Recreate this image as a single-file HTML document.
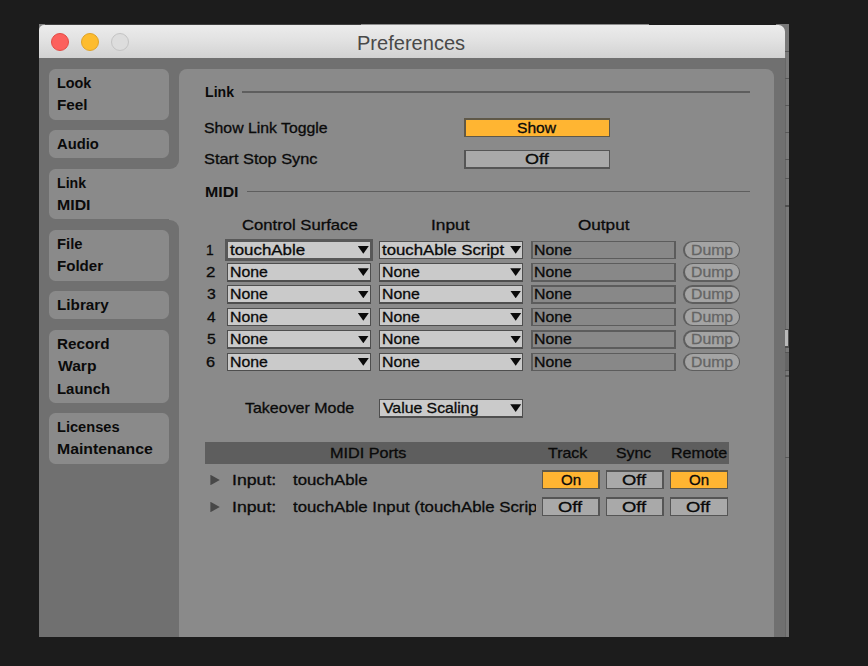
<!DOCTYPE html>
<html lang="en">
<head>
<meta charset="utf-8">
<title>Preferences</title>
<style>
html,body{margin:0;padding:0;}
body{width:868px;height:666px;background:#1c1c1c;overflow:hidden;position:relative;
  font-family:"Liberation Sans",sans-serif;font-size:14.5px;color:#0a0a0a;}
div{position:absolute;box-sizing:border-box;}
.t{white-space:nowrap;line-height:20px;height:20px;transform-origin:0 0;-webkit-text-stroke:0.3px;}
.b{font-weight:bold;-webkit-text-stroke:0;}
.g{background:#8a8a8a;}
.hr{height:1.5px;background:#5e5e5e;}
.btn{background:#555555;}.btni{background:#a9a9a9;}
.on{background:#5f5848;}.oni{background:#ffb532;}
.dd{background:#4e4e4e;}.ddi{background:#cacaca;}
.ddf{background:#585858;}.ddfi{background:#cacaca;}
.out{background:#5c5c5c;}.outi{background:#888888;}
.pill{background:#5e5e5e;}.pilli{background:#a4a4a4;}
.arrow{width:11px;height:7.6px;background:#0a0a0a;clip-path:polygon(0 0,100% 0,50% 100%);}
.tri{width:9.4px;height:10.4px;background:#484848;clip-path:polygon(0 0,100% 50%,0 100%);}
.tick{left:785px;width:4px;height:1px;background:#575757;}
.dot{top:33px;width:18px;height:18px;border-radius:50%;}
</style>
</head>
<body>
<div style="left:39px;top:24.2px;width:322px;height:5.8px;background:#404040;"></div>
<div style="left:39px;top:24.2px;width:6px;height:6.8px;background:#808080;"></div>
<div style="left:361px;top:24.2px;width:288px;height:5.8px;background:#8c8c8c;"></div>
<div style="left:776px;top:24px;width:13px;height:613px;background:#797979;"></div>
<div style="left:39px;top:25.3px;width:746px;height:611.7px;background:#707070;border-radius:5px 6.5px 0 0;"></div>
<div style="left:784.5px;top:58px;width:1.5px;height:579px;background:#676767;"></div>
<div class="tick" style="top:51px;"></div>
<div class="tick" style="top:78px;"></div>
<div class="tick" style="top:105px;"></div>
<div class="tick" style="top:132px;"></div>
<div class="tick" style="top:158.5px;"></div>
<div class="tick" style="top:178px;"></div>
<div class="tick" style="top:457px;"></div>
<div style="left:785px;top:204.5px;width:4px;height:2.5px;background:#4e4e4e;"></div>
<div style="left:784.5px;top:328.5px;width:4.5px;height:19.0px;background:#4e4e4e;"></div>
<div style="left:784.7px;top:330px;width:3.6px;height:16px;background:#b9b9b9;"></div>
<div style="left:785px;top:352px;width:4px;height:19px;background:#666666;border-top:1.5px solid #555;border-bottom:1.5px solid #555;"></div>
<div style="left:785px;top:374.5px;width:4px;height:2.5px;background:#555;"></div>
<div style="left:39px;top:25.3px;width:746px;height:32.7px;background:linear-gradient(#ececec,#e2e2e2 45%,#d2d2d2);border-radius:5px 6.5px 0 0;"></div>
<div class="dot" style="left:51px;background:#fc615d;border:1px solid #e34b44;"></div>
<div class="dot" style="left:80.75px;background:#fdbc2e;border:1px solid #e0a327;"></div>
<div class="dot" style="left:110.5px;background:#dddddd;border:1px solid #c4c4c4;"></div>
<div class="t" style="left:357.26px;top:33px;transform:scaleX(1.0282);font-size:19.5px;color:#494949;-webkit-text-stroke:0;">Preferences</div>
<div class="g" style="left:49px;top:69px;width:120px;height:50.5px;border-radius:6.5px;"></div>
<div class="g" style="left:49px;top:130px;width:120px;height:28px;border-radius:6.5px;"></div>
<div class="g" style="left:49px;top:168.6px;width:120px;height:50.9px;border-radius:6.5px;"></div>
<div class="g" style="left:49px;top:230px;width:120px;height:50.5px;border-radius:6.5px;"></div>
<div class="g" style="left:49px;top:291px;width:120px;height:28px;border-radius:6.5px;"></div>
<div class="g" style="left:49px;top:330px;width:120px;height:73px;border-radius:6.5px;"></div>
<div class="g" style="left:49px;top:413px;width:120px;height:51px;border-radius:6.5px;"></div>
<div class="g" style="left:179px;top:69px;width:595px;height:568px;border-radius:8px 8px 0 0;"></div>
<div class="g" style="left:160px;top:168.6px;width:30px;height:50.9px;"></div>
<div class="g" style="left:169px;top:158px;width:11px;height:11px;"></div>
<div style="left:169px;top:155px;width:10px;height:13.6px;background:#707070;border-radius:0 0 9px 0;"></div>
<div class="g" style="left:169px;top:219px;width:11px;height:12px;"></div>
<div style="left:169px;top:219.5px;width:10px;height:13.5px;background:#707070;border-radius:0 9px 0 0;"></div>
<div class="t b" style="left:57.01px;top:73px;transform:scaleX(0.9925);">Look</div>
<div class="t b" style="left:56.94px;top:95px;transform:scaleX(1.0556);">Feel</div>
<div class="t b" style="left:57.49px;top:134px;transform:scaleX(1.0188);">Audio</div>
<div class="t b" style="left:57.03px;top:173px;transform:scaleX(0.9739);">Link</div>
<div class="t b" style="left:56.90px;top:195px;transform:scaleX(1.0957);">MIDI</div>
<div class="t b" style="left:56.98px;top:234px;transform:scaleX(1.0213);">File</div>
<div class="t b" style="left:56.96px;top:256px;transform:scaleX(1.0405);">Folder</div>
<div class="t b" style="left:56.95px;top:295px;transform:scaleX(1.0521);">Library</div>
<div class="t b" style="left:56.95px;top:334px;transform:scaleX(1.0521);">Record</div>
<div class="t b" style="left:58.00px;top:356px;transform:scaleX(1.0780);">Warp</div>
<div class="t b" style="left:56.97px;top:379px;transform:scaleX(1.0302);">Launch</div>
<div class="t b" style="left:56.99px;top:417px;transform:scaleX(1.0083);">Licenses</div>
<div class="t b" style="left:56.91px;top:439px;transform:scaleX(1.0899);">Maintenance</div>
<div class="t b" style="left:204.53px;top:82px;transform:scaleX(0.9739);">Link</div>
<div class="hr" style="left:242px;top:91.25px;width:508px;height:1.5px;"></div>
<div class="t" style="left:204.48px;top:118px;transform:scaleX(1.0902);">Show Link Toggle</div>
<div class="t" style="left:204.46px;top:149px;transform:scaleX(1.1266);">Start Stop Sync</div>
<div class="on" style="left:464px;top:118px;width:146px;height:19px;"><div class="oni" style="left:1.5px;top:1.5px;width:143.0px;height:16.0px;"></div></div>
<div class="t" style="left:517.44px;top:118px;transform:scaleX(1.0775);">Show</div>
<div class="btn" style="left:464px;top:149.5px;width:146px;height:19.0px;"><div class="btni" style="left:1.5px;top:1.5px;width:143.0px;height:16.0px;"></div></div>
<div class="t" style="left:525.07px;top:149px;transform:scaleX(1.2432);">Off</div>
<div class="t b" style="left:204.90px;top:182px;transform:scaleX(1.0957);">MIDI</div>
<div class="hr" style="left:246.5px;top:190.75px;width:503.5px;height:1.5px;"></div>
<div class="t" style="left:241.64px;top:215px;transform:scaleX(1.1486);">Control Surface</div>
<div class="t" style="left:431.01px;top:215px;transform:scaleX(1.1935);">Input</div>
<div class="t" style="left:577.61px;top:215px;transform:scaleX(1.1813);">Output</div>
<div class="t" style="left:206.35px;top:240px;transform:scaleX(0.9538);">1</div>
<div class="ddf" style="left:225.1px;top:239.1px;width:147.8px;height:21.55px;"><div class="ddfi" style="left:2.8px;top:2.8px;width:142.2px;height:15.95px;"></div></div>
<div class="t" style="left:230.31px;top:240px;transform:scaleX(1.1638);">touchAble</div>
<div class="arrow" style="left:357.8px;top:246.05px;"></div>
<div class="dd" style="left:379px;top:240.5px;width:144px;height:18.75px;"><div class="ddi" style="left:1.4px;top:1.4px;width:141.2px;height:15.95px;"></div></div>
<div class="t" style="left:382.01px;top:240px;transform:scaleX(1.1563);">touchAble Script</div>
<div class="arrow" style="left:510.2px;top:246.05px;"></div>
<div class="out" style="left:531px;top:240.5px;width:144.5px;height:18.75px;"><div class="outi" style="left:1.5px;top:1.5px;width:141.5px;height:15.75px;"></div></div>
<div class="t" style="left:534.14px;top:240px;transform:scaleX(1.0916);">None</div>
<div class="pill" style="left:683.25px;top:240.5px;width:56.75px;height:18.75px;border-radius:9.5px;"><div class="pilli" style="left:1.5px;top:1.5px;width:53.75px;height:15.75px;border-radius:8.0px;"></div></div>
<div class="t" style="left:690.64px;top:240px;transform:scaleX(1.0884);color:#646464;">Dump</div>
<div class="t" style="left:206.42px;top:262px;transform:scaleX(1.1692);">2</div>
<div class="dd" style="left:227px;top:262.75px;width:144px;height:18.75px;"><div class="ddi" style="left:1.4px;top:1.4px;width:141.2px;height:15.95px;"></div></div>
<div class="t" style="left:229.89px;top:262px;transform:scaleX(1.0916);">None</div>
<div class="arrow" style="left:357.8px;top:268.3px;"></div>
<div class="dd" style="left:379px;top:262.75px;width:144px;height:18.75px;"><div class="ddi" style="left:1.4px;top:1.4px;width:141.2px;height:15.95px;"></div></div>
<div class="t" style="left:382.14px;top:262px;transform:scaleX(1.0916);">None</div>
<div class="arrow" style="left:510.2px;top:268.3px;"></div>
<div class="out" style="left:531px;top:262.75px;width:144.5px;height:18.75px;"><div class="outi" style="left:1.5px;top:1.5px;width:141.5px;height:15.75px;"></div></div>
<div class="t" style="left:534.14px;top:262px;transform:scaleX(1.0916);">None</div>
<div class="pill" style="left:683.25px;top:262.75px;width:56.75px;height:18.75px;border-radius:9.5px;"><div class="pilli" style="left:1.5px;top:1.5px;width:53.75px;height:15.75px;border-radius:8.0px;"></div></div>
<div class="t" style="left:690.64px;top:262px;transform:scaleX(1.0884);color:#646464;">Dump</div>
<div class="t" style="left:206.76px;top:284px;transform:scaleX(1.0857);">3</div>
<div class="dd" style="left:227px;top:285.0px;width:144px;height:18.75px;"><div class="ddi" style="left:1.4px;top:1.4px;width:141.2px;height:15.95px;"></div></div>
<div class="t" style="left:229.89px;top:284px;transform:scaleX(1.0916);">None</div>
<div class="arrow" style="left:357.8px;top:290.55px;"></div>
<div class="dd" style="left:379px;top:285.0px;width:144px;height:18.75px;"><div class="ddi" style="left:1.4px;top:1.4px;width:141.2px;height:15.95px;"></div></div>
<div class="t" style="left:382.14px;top:284px;transform:scaleX(1.0916);">None</div>
<div class="arrow" style="left:510.2px;top:290.55px;"></div>
<div class="out" style="left:531px;top:285.0px;width:144.5px;height:18.75px;"><div class="outi" style="left:1.5px;top:1.5px;width:141.5px;height:15.75px;"></div></div>
<div class="t" style="left:534.14px;top:284px;transform:scaleX(1.0916);">None</div>
<div class="pill" style="left:683.25px;top:285.0px;width:56.75px;height:18.75px;border-radius:9.5px;"><div class="pilli" style="left:1.5px;top:1.5px;width:53.75px;height:15.75px;border-radius:8.0px;"></div></div>
<div class="t" style="left:690.64px;top:284px;transform:scaleX(1.0884);color:#646464;">Dump</div>
<div class="t" style="left:207.03px;top:307px;transform:scaleX(1.0667);">4</div>
<div class="dd" style="left:227px;top:307.5px;width:144px;height:18.75px;"><div class="ddi" style="left:1.4px;top:1.4px;width:141.2px;height:15.95px;"></div></div>
<div class="t" style="left:229.89px;top:307px;transform:scaleX(1.0916);">None</div>
<div class="arrow" style="left:357.8px;top:313.05px;"></div>
<div class="dd" style="left:379px;top:307.5px;width:144px;height:18.75px;"><div class="ddi" style="left:1.4px;top:1.4px;width:141.2px;height:15.95px;"></div></div>
<div class="t" style="left:382.14px;top:307px;transform:scaleX(1.0916);">None</div>
<div class="arrow" style="left:510.2px;top:313.05px;"></div>
<div class="out" style="left:531px;top:307.5px;width:144.5px;height:18.75px;"><div class="outi" style="left:1.5px;top:1.5px;width:141.5px;height:15.75px;"></div></div>
<div class="t" style="left:534.14px;top:307px;transform:scaleX(1.0916);">None</div>
<div class="pill" style="left:683.25px;top:307.5px;width:56.75px;height:18.75px;border-radius:9.5px;"><div class="pilli" style="left:1.5px;top:1.5px;width:53.75px;height:15.75px;border-radius:8.0px;"></div></div>
<div class="t" style="left:690.64px;top:307px;transform:scaleX(1.0884);color:#646464;">Dump</div>
<div class="t" style="left:206.76px;top:329px;transform:scaleX(1.0857);">5</div>
<div class="dd" style="left:227px;top:330.0px;width:144px;height:18.75px;"><div class="ddi" style="left:1.4px;top:1.4px;width:141.2px;height:15.95px;"></div></div>
<div class="t" style="left:229.89px;top:329px;transform:scaleX(1.0916);">None</div>
<div class="arrow" style="left:357.8px;top:335.55px;"></div>
<div class="dd" style="left:379px;top:330.0px;width:144px;height:18.75px;"><div class="ddi" style="left:1.4px;top:1.4px;width:141.2px;height:15.95px;"></div></div>
<div class="t" style="left:382.14px;top:329px;transform:scaleX(1.0916);">None</div>
<div class="arrow" style="left:510.2px;top:335.55px;"></div>
<div class="out" style="left:531px;top:330.0px;width:144.5px;height:18.75px;"><div class="outi" style="left:1.5px;top:1.5px;width:141.5px;height:15.75px;"></div></div>
<div class="t" style="left:534.14px;top:329px;transform:scaleX(1.0916);">None</div>
<div class="pill" style="left:683.25px;top:330.0px;width:56.75px;height:18.75px;border-radius:9.5px;"><div class="pilli" style="left:1.5px;top:1.5px;width:53.75px;height:15.75px;border-radius:8.0px;"></div></div>
<div class="t" style="left:690.64px;top:329px;transform:scaleX(1.0884);color:#646464;">Dump</div>
<div class="t" style="left:206.46px;top:352px;transform:scaleX(1.1259);">6</div>
<div class="dd" style="left:227px;top:352.5px;width:144px;height:18.75px;"><div class="ddi" style="left:1.4px;top:1.4px;width:141.2px;height:15.95px;"></div></div>
<div class="t" style="left:229.89px;top:352px;transform:scaleX(1.0916);">None</div>
<div class="arrow" style="left:357.8px;top:358.05px;"></div>
<div class="dd" style="left:379px;top:352.5px;width:144px;height:18.75px;"><div class="ddi" style="left:1.4px;top:1.4px;width:141.2px;height:15.95px;"></div></div>
<div class="t" style="left:382.14px;top:352px;transform:scaleX(1.0916);">None</div>
<div class="arrow" style="left:510.2px;top:358.05px;"></div>
<div class="out" style="left:531px;top:352.5px;width:144.5px;height:18.75px;"><div class="outi" style="left:1.5px;top:1.5px;width:141.5px;height:15.75px;"></div></div>
<div class="t" style="left:534.14px;top:352px;transform:scaleX(1.0916);">None</div>
<div class="pill" style="left:683.25px;top:352.5px;width:56.75px;height:18.75px;border-radius:9.5px;"><div class="pilli" style="left:1.5px;top:1.5px;width:53.75px;height:15.75px;border-radius:8.0px;"></div></div>
<div class="t" style="left:690.64px;top:352px;transform:scaleX(1.0884);color:#646464;">Dump</div>
<div class="t" style="left:245.22px;top:398px;transform:scaleX(1.1018);">Takeover Mode</div>
<div class="dd" style="left:379px;top:398.75px;width:144px;height:18.75px;"><div class="ddi" style="left:1.4px;top:1.4px;width:141.2px;height:15.95px;"></div></div>
<div class="t" style="left:382.50px;top:398px;transform:scaleX(1.0893);">Value Scaling</div>
<div class="arrow" style="left:510.2px;top:404.3px;"></div>
<div style="left:204.6px;top:441.75px;width:524.65px;height:22.0px;background:#5e5e5e;"></div>
<div class="t" style="left:329.60px;top:443px;transform:scaleX(1.1161);">MIDI Ports</div>
<div class="t" style="left:548.23px;top:443px;transform:scaleX(1.0986);">Track</div>
<div class="t" style="left:615.93px;top:443px;transform:scaleX(1.0887);">Sync</div>
<div class="t" style="left:670.87px;top:443px;transform:scaleX(1.1077);">Remote</div>
<div class="tri" style="left:210.4px;top:474.8px;"></div>
<div class="t" style="left:231.77px;top:470px;transform:scaleX(1.2207);">Input:</div>
<div class="t" style="left:293.21px;top:470px;transform:scaleX(1.1575);">touchAble</div>
<div class="on" style="left:541.5px;top:470.25px;width:58.0px;height:18.75px;"><div class="oni" style="left:1.5px;top:1.5px;width:55.0px;height:15.75px;"></div></div>
<div class="t" style="left:560.59px;top:470px;transform:scaleX(1.0423);">On</div>
<div class="btn" style="left:605.75px;top:470.25px;width:58.0px;height:18.75px;"><div class="btni" style="left:1.5px;top:1.5px;width:55.0px;height:15.75px;"></div></div>
<div class="t" style="left:622.17px;top:470px;transform:scaleX(1.2703);">Off</div>
<div class="on" style="left:669.75px;top:470.25px;width:58.25px;height:18.75px;"><div class="oni" style="left:1.5px;top:1.5px;width:55.25px;height:15.75px;"></div></div>
<div class="t" style="left:688.97px;top:470px;transform:scaleX(1.0423);">On</div>
<div class="tri" style="left:210.4px;top:501.8px;"></div>
<div class="t" style="left:231.77px;top:497px;transform:scaleX(1.2207);">Input:</div>
<div class="t" style="left:293.21px;top:497px;transform:scaleX(1.1575);width:210.37px;overflow:hidden;">touchAble Input (touchAble Script)</div>
<div class="btn" style="left:541.5px;top:497px;width:58.0px;height:19px;"><div class="btni" style="left:1.5px;top:1.5px;width:55.0px;height:16.0px;"></div></div>
<div class="t" style="left:557.92px;top:497px;transform:scaleX(1.2703);">Off</div>
<div class="btn" style="left:605.75px;top:497px;width:58.0px;height:19px;"><div class="btni" style="left:1.5px;top:1.5px;width:55.0px;height:16.0px;"></div></div>
<div class="t" style="left:622.17px;top:497px;transform:scaleX(1.2703);">Off</div>
<div class="btn" style="left:669.75px;top:497px;width:58.25px;height:19px;"><div class="btni" style="left:1.5px;top:1.5px;width:55.25px;height:16.0px;"></div></div>
<div class="t" style="left:686.30px;top:497px;transform:scaleX(1.2703);">Off</div>
</body>
</html>
